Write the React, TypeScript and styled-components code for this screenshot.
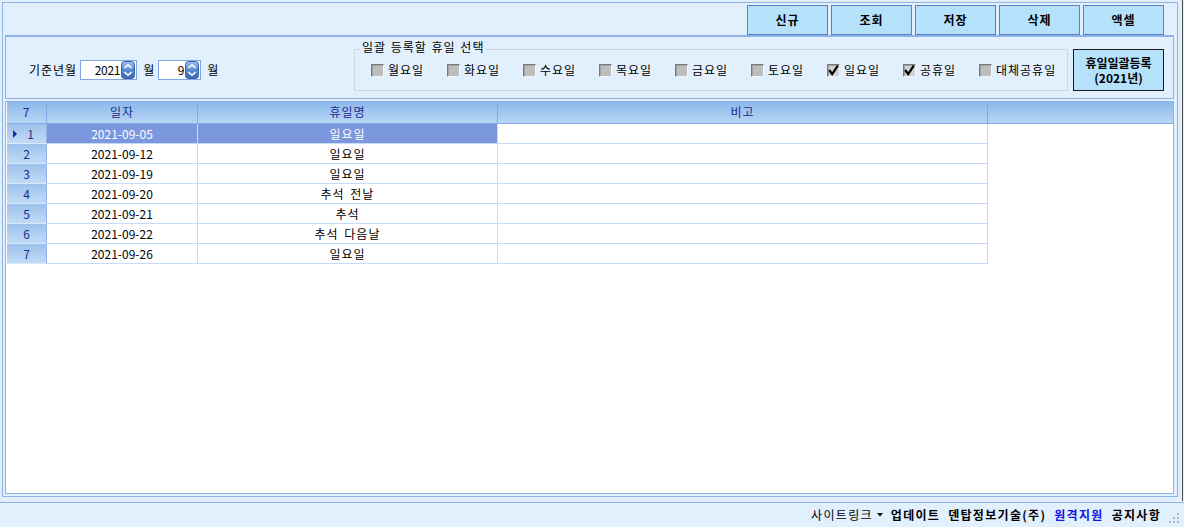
import React from "react";
import styled, { createGlobalStyle } from "styled-components";

const Global = createGlobalStyle`
  html, body { margin: 0; padding: 0; background: #e2effd; }
  body { font-family: "Noto Sans CJK KR", "Noto Sans", sans-serif; font-size: 12px; color: #000; }
  * { box-sizing: border-box; }
`;

const BORDER = "#8db3e7";
const NAVY = "#1d2b8e";

const Page = styled.div`
  width: 1184px;
  height: 527px;
  display: flex;
  flex-direction: column;
  overflow: hidden;
  background: #e2effd;
`;

const Top = styled.div`
  width: 1183px;
  height: 501px;
  padding: 2px 0 0 2px;
  border-right: 1px solid #4d4d4d;
`;

const Frame = styled.div`
  width: 1176px;
  height: 495px;
  border: 1px solid ${BORDER};
  display: flex;
  flex-direction: column;
`;

const Toolbar = styled.div`
  height: 32px;
  display: flex;
  justify-content: flex-end;
  align-items: flex-start;
  gap: 3px;
  padding: 2px 13px 0 0;
`;

const ToolButton = styled.button`
  width: 81px;
  height: 30px;
  border: 1px solid #5b80c5;
  background: #b6e1fb;
  font-family: inherit;
  font-size: 12px;
  font-weight: bold;
  letter-spacing: 1px;
  color: #000;
  padding: 0;
  line-height: 14px;
`;

const Content = styled.div`
  flex: 1;
  display: flex;
  flex-direction: column;
  padding: 0 3px 2px 2px;
`;

const FilterPanel = styled.div`
  height: 64px;
  border: 1px solid ${BORDER};
  border-top-width: 2px;
  display: flex;
  align-items: center;
  padding: 5px 9px 0 23px;
`;

const Label = styled.span<{ $ml?: number }>`
  line-height: 14px;
  letter-spacing: 1px;
  margin-left: ${(p) => p.$ml ?? 0}px;
  white-space: nowrap;
`;

const SpinBox = styled.div<{ $w: number }>`
  width: ${(p) => p.$w}px;
  height: 20px;
  border: 1px solid #7ea6e0;
  background: #fff;
  display: flex;
  align-items: center;
  justify-content: flex-end;
  padding-right: 1px;
  margin-left: 3px;
`;

const SpinValue = styled.span`
  line-height: 14px;
  margin-right: 1px;
  letter-spacing: -0.3px;
`;

const Group = styled.div`
  position: relative;
  width: 714px;
  height: 42px;
  margin-left: auto;
  border: 1px solid #d2d6dc;
  display: flex;
  align-items: center;
  padding-left: 16px;
`;

const Legend = styled.span`
  position: absolute;
  top: -10px;
  left: 6px;
  padding: 0 1px;
  background: #e2effd;
  line-height: 14px;
  letter-spacing: 1px;
  word-spacing: 1px;
`;

const CheckItem = styled.label<{ $w?: number }>`
  display: flex;
  align-items: center;
  gap: 4px;
  width: ${(p) => (p.$w ? `${p.$w}px` : "auto")};
  line-height: 14px;
  letter-spacing: 1px;
  white-space: nowrap;
`;

const Box = styled.span<{ $checked?: boolean }>`
  width: 13px;
  height: 13px;
  border: 1px solid;
  border-color: #7a7a7a #f4f4f4 #f4f4f4 #7a7a7a;
  background: ${(p) => (p.$checked ? "#d2d2d2" : "#bdbdbd")};
  box-shadow: inset 1px 1px 0 #a0a0a0;
  display: flex;
  align-items: center;
  justify-content: center;
`;

const BulkButton = styled.button`
  width: 91px;
  height: 42px;
  margin-left: 5px;
  border: 1px solid #1c1c1c;
  background: #b6e1fb;
  font-family: inherit;
  font-size: 12px;
  font-weight: bold;
  line-height: 15px;
  padding: 0;
  color: #000;
  display: flex;
  flex-direction: column;
  align-items: center;
  justify-content: center;
`;

const BulkLine = styled.span`
  display: block;
  white-space: nowrap;
`;

const Grid = styled.div`
  flex: 1;
  margin-top: 2px;
  border: 1px solid ${BORDER};
  background: #fff;
  padding-left: 1px;
  display: flex;
  flex-direction: column;
`;

const HeaderRow = styled.div`
  height: 22px;
  display: flex;
  border-bottom: 1px solid #84ace4;
  background: linear-gradient(#8cb8ea, #b8d6f5);
`;

const HeadCell = styled.div<{ $w?: number }>`
  width: ${(p) => (p.$w ? `${p.$w}px` : "auto")};
  flex: ${(p) => (p.$w ? "none" : "1")};
  border-right: 1px solid #7fa9e2;
  color: ${NAVY};
  text-align: center;
  line-height: 20px;
  letter-spacing: 1px;
  &:last-child { border-right: none; }
`;

const Row = styled.div`
  height: 20px;
  display: flex;
`;

const RowHead = styled.div`
  width: 40px;
  flex: none;
  border-right: 1px solid #8db3e7;
  border-bottom: 1px solid #dbe8f8;
  background: linear-gradient(#9cc1ec, #c1dbf6);
  color: ${NAVY};
  display: flex;
  align-items: center;
  justify-content: center;
  position: relative;
  line-height: 19px;
`;

const RowNum = styled.span<{ $sel?: boolean }>`
  margin-left: ${(p) => (p.$sel ? 8 : 0)}px;
`;

const Arrow = styled.span`
  position: absolute;
  left: 6px;
  top: 6px;
  width: 0;
  height: 0;
  border-top: 4px solid transparent;
  border-bottom: 4px solid transparent;
  border-left: 4px solid ${NAVY};
`;

const Cell = styled.div<{ $w: number; $sel?: boolean; $kr?: boolean }>`
  width: ${(p) => p.$w}px;
  flex: none;
  border-right: 1px solid #c6dbf5;
  border-bottom: 1px solid #c6dbf5;
  background: ${(p) => (p.$sel ? "#7b97dd" : "#fff")};
  color: ${(p) => (p.$sel ? "#fff" : "#000")};
  text-align: center;
  line-height: 19px;
  letter-spacing: ${(p) => (p.$kr ? "1px" : "0")};
  word-spacing: ${(p) => (p.$kr ? "2px" : "0")};
  white-space: nowrap;
`;

const StatusBar = styled.div`
  margin-top: 1px;
  height: 25px;
  border-top: 1px solid ${BORDER};
  display: flex;
  justify-content: flex-end;
  align-items: center;
  gap: 8px;
  padding: 0 4px 0 0;
`;

const StatusLink = styled.span<{ $bold?: boolean; $blue?: boolean }>`
  font-weight: ${(p) => (p.$bold ? "bold" : "normal")};
  color: ${(p) => (p.$blue ? "#1515e6" : "#000")};
  line-height: 14px;
  letter-spacing: 1.3px;
  white-space: nowrap;
  display: flex;
  align-items: center;
  gap: 4px;
`;

const Grip = styled.svg`
  align-self: flex-end;
  margin-bottom: 3px;
`;

const Spinner = () => (
  <svg width="14" height="18" viewBox="0 0 14 18">
    <defs>
      <linearGradient id="sg" x1="0" y1="0" x2="0" y2="1">
        <stop offset="0" stopColor="#9cc2ee" />
        <stop offset="0.5" stopColor="#5a8bd0" />
        <stop offset="1" stopColor="#3c68b2" />
      </linearGradient>
    </defs>
    <rect x="0.5" y="0.5" width="13" height="17" rx="3" fill="url(#sg)" stroke="#3d64a8" />
    <path d="M3.5 7 L7 3.8 L10.5 7" fill="none" stroke="#fff" strokeWidth="1.6" />
    <path d="M3.5 11 L7 14.2 L10.5 11" fill="none" stroke="#fff" strokeWidth="1.6" />
  </svg>
);

const Check = () => (
  <svg width="11" height="11" viewBox="0 0 11 11">
    <path d="M1.2 5 L4.2 9 L9.8 0.6" fill="none" stroke="#000" strokeWidth="2.2" />
  </svg>
);

const days: { label: string; checked: boolean }[] = [
  { label: "월요일", checked: false },
  { label: "화요일", checked: false },
  { label: "수요일", checked: false },
  { label: "목요일", checked: false },
  { label: "금요일", checked: false },
  { label: "토요일", checked: false },
  { label: "일요일", checked: true },
  { label: "공휴일", checked: true },
  { label: "대체공휴일", checked: false },
];

const rows = [
  { date: "2021-09-05", name: "일요일" },
  { date: "2021-09-12", name: "일요일" },
  { date: "2021-09-19", name: "일요일" },
  { date: "2021-09-20", name: "추석 전날" },
  { date: "2021-09-21", name: "추석" },
  { date: "2021-09-22", name: "추석 다음날" },
  { date: "2021-09-26", name: "일요일" },
];

export default function App() {
  return (
    <>
      <Global />
      <Page>
        <Top>
          <Frame>
            <Toolbar>
              {["신규", "조회", "저장", "삭제", "액셀"].map((t) => (
                <ToolButton key={t}>{t}</ToolButton>
              ))}
            </Toolbar>
            <Content>
              <FilterPanel>
                <Label>기준년월</Label>
                <SpinBox $w={57}>
                  <SpinValue>2021</SpinValue>
                  <Spinner />
                </SpinBox>
                <Label $ml={6}>월</Label>
                <SpinBox $w={43}>
                  <SpinValue>9</SpinValue>
                  <Spinner />
                </SpinBox>
                <Label $ml={6}>월</Label>
                <Group>
                  <Legend>일괄 등록할 휴일 선택</Legend>
                  {days.map((d, i) => (
                    <CheckItem key={d.label} $w={i < days.length - 1 ? 76 : undefined}>
                      <Box $checked={d.checked}>{d.checked && <Check />}</Box>
                      {d.label}
                    </CheckItem>
                  ))}
                </Group>
                <BulkButton>
                  <BulkLine>휴일일괄등록</BulkLine>
                  <BulkLine>(2021년)</BulkLine>
                </BulkButton>
              </FilterPanel>
              <Grid>
                <HeaderRow>
                  <HeadCell $w={40}>7</HeadCell>
                  <HeadCell $w={151}>일자</HeadCell>
                  <HeadCell $w={300}>휴일명</HeadCell>
                  <HeadCell $w={490}>비고</HeadCell>
                  <HeadCell />
                </HeaderRow>
                {rows.map((r, i) => (
                  <Row key={r.date}>
                    <RowHead>
                      {i === 0 && <Arrow />}
                      <RowNum $sel={i === 0}>{i + 1}</RowNum>
                    </RowHead>
                    <Cell $w={151} $sel={i === 0}>{r.date}</Cell>
                    <Cell $w={300} $sel={i === 0} $kr>{r.name}</Cell>
                    <Cell $w={490} />
                  </Row>
                ))}
              </Grid>
            </Content>
          </Frame>
        </Top>
        <StatusBar>
          <StatusLink>
            사이트링크
            <svg width="6" height="4" viewBox="0 0 6 4">
              <path d="M0 0 L6 0 L3 3.5 Z" fill="#000" />
            </svg>
          </StatusLink>
          <StatusLink $bold>업데이트</StatusLink>
          <StatusLink $bold>덴탑정보기술(주)</StatusLink>
          <StatusLink $bold $blue>원격지원</StatusLink>
          <StatusLink $bold>공지사항</StatusLink>
          <Grip width="11" height="11" viewBox="0 0 11 11">
            {[
              [8, 0],
              [4, 4],
              [8, 4],
              [0, 8],
              [4, 8],
              [8, 8],
            ].map(([x, y]) => (
              <rect key={`${x}-${y}`} x={x} y={y} width="2" height="2" fill="#a9b6c6" />
            ))}
          </Grip>
        </StatusBar>
      </Page>
    </>
  );
}
